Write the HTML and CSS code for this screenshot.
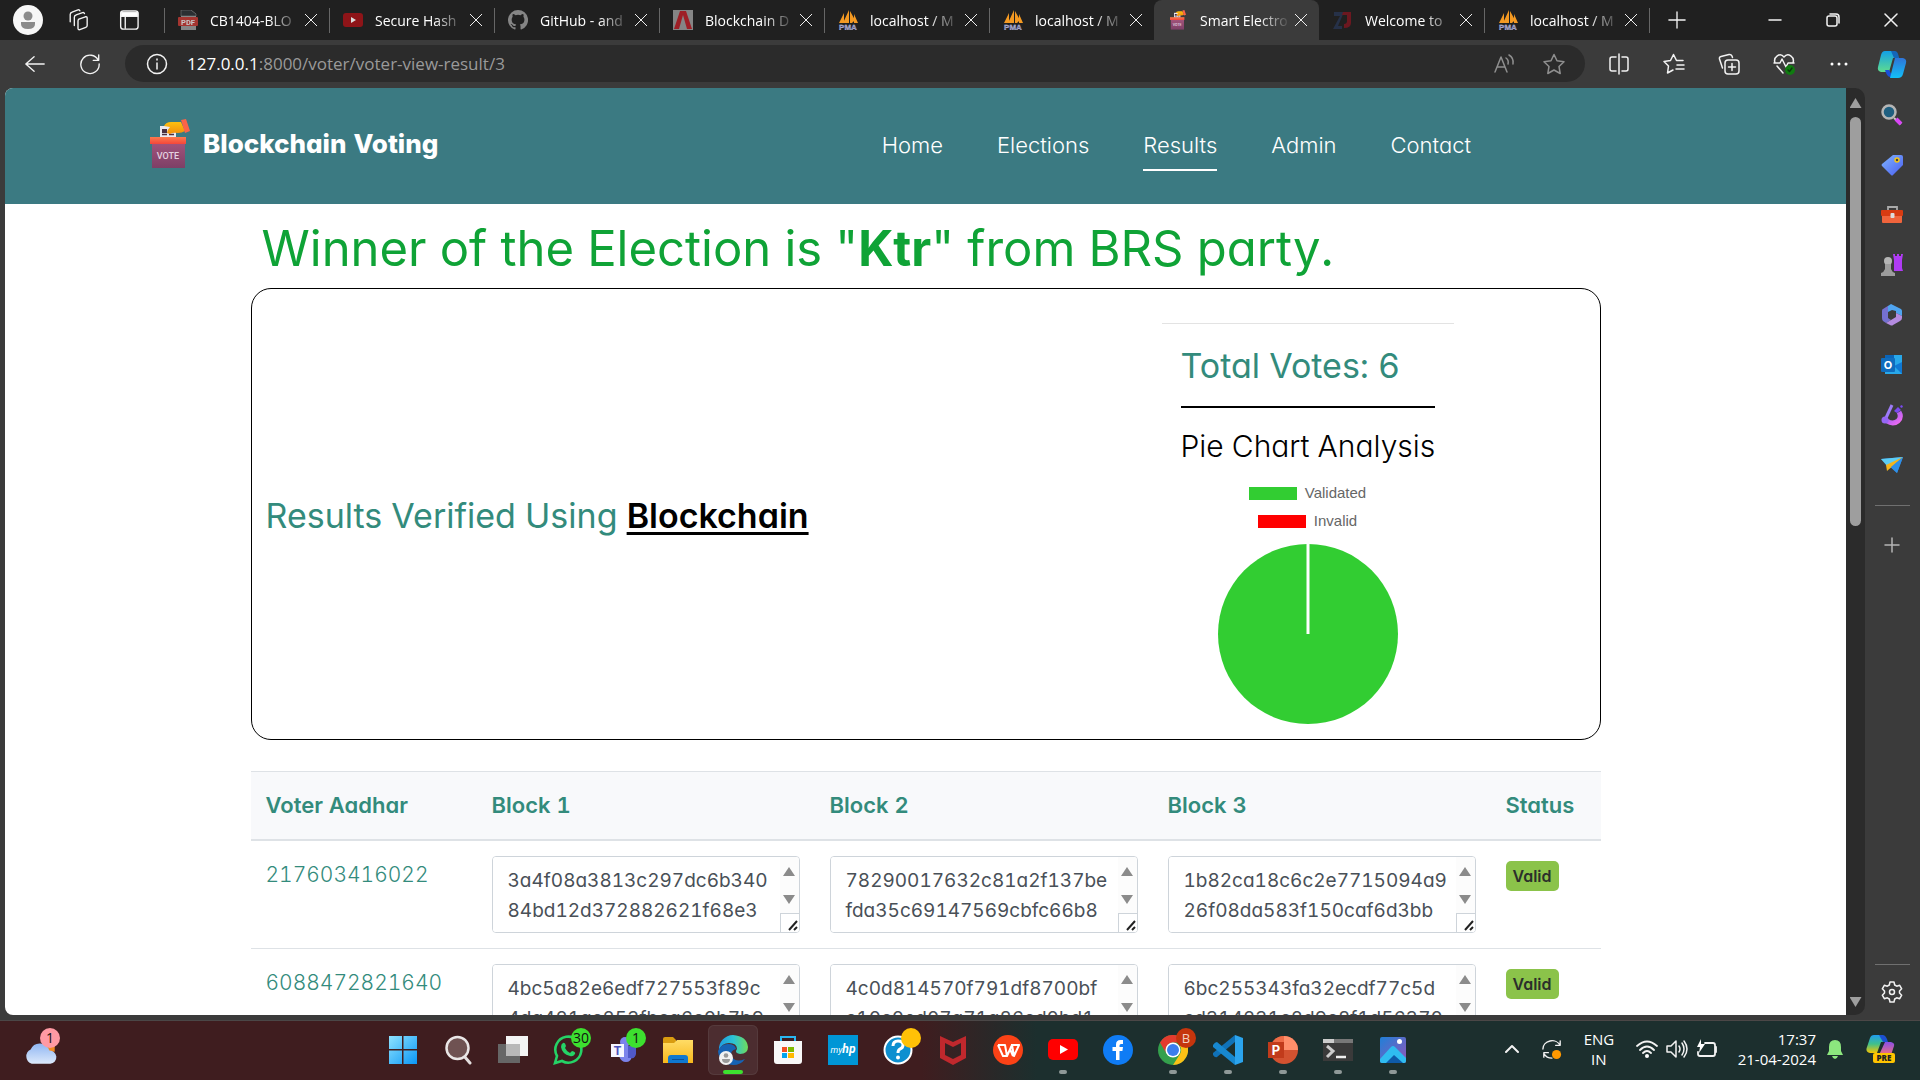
FILE: index.html
```html
<!DOCTYPE html>
<html lang="en">
<head>
<meta charset="utf-8">
<title>Smart Electronic Voting</title>
<link rel="stylesheet" href="styles.css">
</head>
<body>
<svg class="defs" width="0" height="0" aria-hidden="true">
  <defs>
    <linearGradient id="gBox" x1="0" y1="0" x2="0" y2="1"><stop offset="0" stop-color="#a3547c"/><stop offset="1" stop-color="#7d3f66"/></linearGradient>
    <linearGradient id="gOrange" x1="0" y1="0" x2="0" y2="1"><stop offset="0" stop-color="#fc7a4c"/><stop offset="1" stop-color="#f4463a"/></linearGradient>
    <linearGradient id="gHand" x1="0" y1="0" x2="0" y2="1"><stop offset="0" stop-color="#fdc00f"/><stop offset="1" stop-color="#f28f0c"/></linearGradient>
    <linearGradient id="gCopA" x1="0" y1="0" x2="0" y2="1"><stop offset="0" stop-color="#12a0e8"/><stop offset="1" stop-color="#5fdc8e"/></linearGradient>
    <linearGradient id="gCopB" x1="0" y1="0" x2="0" y2="1"><stop offset="0" stop-color="#2f74d8"/><stop offset="1" stop-color="#12c0f8"/></linearGradient>
    <linearGradient id="gCopC" x1="0" y1="0" x2="0" y2="1"><stop offset="0" stop-color="#1f9df0"/><stop offset=".5" stop-color="#3fc08a"/><stop offset="1" stop-color="#f7c600"/></linearGradient>
    <linearGradient id="gCopD" x1="0" y1="0" x2="0" y2="1"><stop offset="0" stop-color="#8a4fe8"/><stop offset="1" stop-color="#f2707a"/></linearGradient>
    <linearGradient id="gCloud" x1="0" y1="0" x2="0" y2="1"><stop offset="0" stop-color="#8fb5f2"/><stop offset="1" stop-color="#dce9fb"/></linearGradient>
    <linearGradient id="gWin" x1="0" y1="0" x2="1" y2="1"><stop offset="0" stop-color="#8fe3ff"/><stop offset="1" stop-color="#0a96f5"/></linearGradient>
    <linearGradient id="gTag" x1="0" y1="0" x2="1" y2="1"><stop offset="0" stop-color="#7fb6ff"/><stop offset="1" stop-color="#4a5df0"/></linearGradient>
    <linearGradient id="gEdge" x1="0" y1="0" x2="1" y2="0"><stop offset="0" stop-color="#1f9be0"/><stop offset=".5" stop-color="#2cc3d5"/><stop offset="1" stop-color="#6fdc5a"/></linearGradient>
    <linearGradient id="gPhoto" x1="0" y1="0" x2="1" y2="1"><stop offset="0" stop-color="#1f80d8"/><stop offset="1" stop-color="#9456b8"/></linearGradient>
    <linearGradient id="gPurple" x1="0" y1="0" x2="1" y2="1"><stop offset="0" stop-color="#8a5cf5"/><stop offset="1" stop-color="#f06af0"/></linearGradient>
    <linearGradient id="gFolder" x1="0" y1="0" x2="0" y2="1"><stop offset="0" stop-color="#ffdc66"/><stop offset="1" stop-color="#f7b81c"/></linearGradient>
    <symbol id="vote" viewBox="0 0 42 50">
      <path d="M11 7h16v12H11z" fill="#eceaf0"/><path d="M13 10h5v4h-5z" fill="#4a3040"/><path d="M13 15.500h5M20 15.500h5" stroke="#4a3040" stroke-width="1.500"/>
      <path d="M15 7Q17 3 22 3h10l4 9q-3 2-7 2-5-1-8 1l-3-1q0-3 3-6z" fill="url(#gHand)"/><path d="M32 1 37 0l4 12-5 2z" fill="#fb6448"/>
      <path d="M3 23h33v26H3z" fill="url(#gBox)"/><path d="M1 18h36v7H1z" fill="url(#gOrange)"/>
      <text x="19" y="40" text-anchor="middle" font-family="Roboto, sans-serif" font-size="9" font-weight="500" fill="#e4d3e0">VOTE</text>
    </symbol>
    <symbol id="pma" viewBox="0 0 20 20">
      <path d="M1 13 6 3v10zM5 13 11 0v13zM12 13V1l5 9-3 3zM16 13V4l4 9z" fill="#f59a22"/>
      <text x="10" y="20" text-anchor="middle" font-family="Liberation Sans, sans-serif" font-size="8" font-weight="700" fill="#7274ac" stroke="#d8d8ea" stroke-width=".3">PMA</text>
    </symbol>
  </defs>
</svg>

<div class="desktop">
  <header class="browser-top">
    <div class="tabstrip">
      <div class="tab-tools">
        <svg class="avatar" viewBox="0 0 30 30"><circle cx="15" cy="15" r="15" fill="#f7f7f7"/><circle cx="15" cy="11" r="4.500" fill="#8b8b8b"/><path d="M8 17h14v2q0 5-7 5t-7-5z" fill="#8b8b8b"/></svg>
        <svg class="i22 ln" viewBox="0 0 24 24"><path d="m13 11 7-2.500q2-.5 2 1.500v8q0 1.500-1.500 2L14 22.500q-2 .5-2-1.500v-8q0-1.500 1-2M8 18V9q0-2 2-2.500L17 4q1.500-.5 2 1M3.500 14V6q0-2 2-2.500L12 1q1.500-.5 2 1"/></svg>
        <svg class="i22 ln" viewBox="0 0 24 24"><rect x="4" y="2" width="19" height="20" rx="3"/><path d="M9 8v13"/><path d="M4.500 3.500h18V8h-18z" fill="#fff"/></svg>
      </div>
      <nav class="tabs" aria-label="Browser tabs">
        <div class="tab"><svg class="fav dim" viewBox="0 0 20 20"><path d="M3 0h10l5 4v16H3z" fill="#a9a9a9"/><path d="M3 0h10l5 4v2H3z" fill="#2f3438" stroke="#aaa" stroke-width=".5"/><rect y="7" width="20" height="9" rx="1" fill="#d23c36"/><text x="10" y="14.500" font-size="7.500" font-weight="700" text-anchor="middle" font-family="Roboto, sans-serif" fill="#fff">PDF</text></svg><span class="tab-title">CB1404-BLO</span><button class="close" aria-label="Close tab"></button></div>
        <div class="tab"><svg class="fav" viewBox="0 0 20 20"><rect y="3" width="20" height="14" rx="3" fill="#8e1418"/><path d="m8 7 5 3-5 3z" fill="#ddd"/></svg><span class="tab-title">Secure Hash</span><button class="close" aria-label="Close tab"></button></div>
        <div class="tab"><svg class="fav" viewBox="0 0 16 16"><path fill="#858585" d="M8 0a8 8 0 0 0-2.530 15.590c.4.070.55-.17.550-.38v-1.490c-2.010.37-2.530-.49-2.690-.94-.09-.23-.48-.94-.82-1.130-.28-.15-.68-.52-.01-.53.630-.01 1.080.58 1.230.82.720 1.210 1.870.87 2.330.66.070-.52.280-.87.510-1.070-1.780-.2-3.640-.89-3.640-3.950 0-.87.310-1.590.820-2.150-.08-.2-.36-1.020.080-2.120 0 0 .67-.21 2.200.82a7.500 7.500 0 0 1 4 0c1.530-1.040 2.200-.82 2.200-.82.440 1.100.16 1.920.08 2.120.51.560.82 1.270.82 2.150 0 3.070-1.870 3.750-3.650 3.950.290.250.54.730.54 1.480v2.200c0 .21.150.46.550.38A8 8 0 0 0 8 0"/></svg><span class="tab-title">GitHub - and</span><button class="close" aria-label="Close tab"></button></div>
        <div class="tab"><svg class="fav" viewBox="0 0 20 20"><path d="M0 0h20v20H0z" fill="#858585"/><path d="M7 1h6l6 18h-5L10 5 6 19H1z" fill="#9e1f26"/></svg><span class="tab-title">Blockchain D</span><button class="close" aria-label="Close tab"></button></div>
        <div class="tab"><svg class="fav"><use href="#pma"/></svg><span class="tab-title">localhost / M</span><button class="close" aria-label="Close tab"></button></div>
        <div class="tab"><svg class="fav"><use href="#pma"/></svg><span class="tab-title">localhost / M</span><button class="close" aria-label="Close tab"></button></div>
        <div class="tab active"><svg class="fav"><use href="#vote"/></svg><span class="tab-title">Smart Electro</span><button class="close" aria-label="Close tab"></button></div>
        <div class="tab"><svg class="fav" viewBox="0 0 20 20"><path d="M1 2h10L5 16h4v3H0L7 6H1z" fill="#263148"/><path d="M10 2h8v11q0 5-7 5v-4q3 0 3-3V5h-5z" fill="#6c1820"/></svg><span class="tab-title">Welcome to</span><button class="close" aria-label="Close tab"></button></div>
        <div class="tab"><svg class="fav"><use href="#pma"/></svg><span class="tab-title">localhost / M</span><button class="close" aria-label="Close tab"></button></div>
      </nav>
      <button class="icon-btn new-tab" aria-label="New tab"><svg class="i20 ln" viewBox="0 0 20 20"><path d="M10 1v18M1 10h18"/></svg></button>
      <div class="win-controls">
        <button class="icon-btn" aria-label="Minimize"><svg class="i14 ln" viewBox="0 0 14 14"><path d="M1 7h12"/></svg></button>
        <button class="icon-btn" aria-label="Restore"><svg class="i14 ln" viewBox="0 0 14 14"><rect x="1" y="3" width="10" height="10" rx="2"/><path d="M4 1h6q3 0 3 3v6"/></svg></button>
        <button class="icon-btn" aria-label="Close window"><svg class="i14 ln" viewBox="0 0 14 14"><path d="m1 1 12 12M13 1 1 13"/></svg></button>
      </div>
    </div>
    <div class="toolbar">
      <button class="icon-btn" aria-label="Back"><svg class="i22 ln" viewBox="0 0 24 24"><path d="M22 12H2m9-8-9 8 9 8"/></svg></button>
      <button class="icon-btn" aria-label="Refresh"><svg class="i22 ln" viewBox="0 0 24 24"><path d="M21 8A10 10 0 1 0 22 12M21.500 2v6h-6"/></svg></button>
      <div class="address">
        <svg class="i22 ln" viewBox="0 0 22 22"><circle cx="11" cy="11" r="9.500"/><path d="M11 10v6M11 6v1"/></svg>
        <p class="url"><b>127.0.0.1</b>:8000/voter/voter-view-result/3</p>
        <svg class="i22 ln faded" viewBox="0 0 22 22"><path d="m2 19 6-15 6 15M4 14h8M13 5q3 2 2 6M16 2q5 3 4 9"/></svg>
        <svg class="i22 ln faded" viewBox="0 0 22 22"><path d="m11 1.500 3 6.300 7 .9-5 4.800 1.200 7L11 17l-6.200 3.500 1.200-7-5-4.800 7-.9z"/></svg>
      </div>
      <div class="tools">
        <button class="icon-btn" aria-label="Split screen"><svg class="i22 ln" viewBox="0 0 22 22"><path d="M11 1v20M8 4H4q-2 0-2 2v10q0 2 2 2h4M14 4h4q2 0 2 2v10q0 2-2 2h-4"/></svg></button>
        <button class="icon-btn" aria-label="Favorites"><svg class="i22 ln" viewBox="0 0 22 22"><path d="M10 17 4.500 20l1-7L1 8.500l6.500-1L10.500 1.500l3 6H20M14 12h7M13 16h8"/></svg></button>
        <button class="icon-btn" aria-label="Collections"><svg class="i22 ln" viewBox="0 0 22 22"><rect x="7" y="7" width="14" height="14" rx="3"/><path d="M14 10.500v7M10.500 14h7M4.500 15 1.500 6Q1 4 3 3.500l8-2q2-.5 3 1.500l.5 1.500"/></svg></button>
        <button class="icon-btn" aria-label="Browser essentials"><svg class="i22 ln" viewBox="0 0 22 22"><path d="M2 10C0 4 7-1 11 4c4-5 11 0 9 6M1 10h6l2-4 4 8 2-4h6M4 13l6 7"/><circle cx="17" cy="17" r="5" fill="#107c10" stroke="none"/><path d="m15 17 1.500 1.500L19 15" stroke="#0a3d0a"/></svg></button>
        <button class="icon-btn" aria-label="Settings and more"><svg class="i22" viewBox="0 0 22 22" fill="#fff"><circle cx="4" cy="11" r="1.500"/><circle cx="11" cy="11" r="1.500"/><circle cx="18" cy="11" r="1.500"/></svg></button>
        <button class="icon-btn copilot" aria-label="Copilot"><svg class="i30" viewBox="0 0 30 30"><path d="M8 2h9l5 7h-6l-4 14H4q-4-1-3-5l3-12q1-4 4-4" fill="url(#gCopA)"/><path d="M14 2h4q3 0 4 7h-5z" fill="#1466b8"/><path d="M8 21h4l4 7h-3q-3 0-5-7" fill="#1a4fd8"/><path d="M18 9h8q4 1 3 5l-3 11q-1 4-5 4h-8z" fill="url(#gCopB)"/></svg></button>
      </div>
    </div>
  </header>

  <div class="browser-body">
    <main class="page">
      <header class="site-header">
        <a class="brand" href="#"><svg class="brand-logo"><use href="#vote"/></svg>Blockchain Voting</a>
        <nav class="site-nav">
          <a href="#">Home</a><a href="#">Elections</a><a class="current" href="#">Results</a><a href="#">Admin</a><a href="#">Contact</a>
        </nav>
      </header>
      <div class="container">
        <h1>Winner of the Election is "<b>Ktr</b>" from BRS party.</h1>
        <section class="summary">
          <h2 class="verified">Results Verified Using <b>Blockchain</b></h2>
          <div class="stats">
            <h2>Total Votes: 6</h2>
            <h3>Pie Chart Analysis</h3>
            <ul class="legend">
              <li><i class="swatch ok"></i>Validated</li>
              <li><i class="swatch bad"></i>Invalid</li>
            </ul>
            <svg class="pie" viewBox="0 0 180 180" role="img" aria-label="6 validated, 0 invalid"><circle cx="90" cy="90" r="90" fill="#32cd32"/><path d="M90 0v90" stroke="#fff" stroke-width="3"/></svg>
          </div>
        </section>
        <table class="votes">
          <thead><tr><th class="c-id">Voter Aadhar</th><th class="c-block">Block 1</th><th class="c-block">Block 2</th><th class="c-block">Block 3</th><th>Status</th></tr></thead>
          <tbody>
            <tr>
              <td>217603416022</td>
              <td><div class="hash"><textarea aria-label="Block 1">3a4f08a3813c297dc6b340
84bd12d372882621f68e3</textarea><span class="bar"><i class="up"></i><i class="down"></i><svg class="grip" viewBox="0 0 18 18"><path d="m8 16 8-9M13 16l3-3"/></svg></span></div></td>
              <td><div class="hash"><textarea aria-label="Block 2">78290017632c81a2f137be
fda35c69147569cbfc66b8</textarea><span class="bar"><i class="up"></i><i class="down"></i><svg class="grip" viewBox="0 0 18 18"><path d="m8 16 8-9M13 16l3-3"/></svg></span></div></td>
              <td><div class="hash"><textarea aria-label="Block 3">1b82ca18c6c2e7715094a9
26f08da583f150caf6d3bb</textarea><span class="bar"><i class="up"></i><i class="down"></i><svg class="grip" viewBox="0 0 18 18"><path d="m8 16 8-9M13 16l3-3"/></svg></span></div></td>
              <td><span class="badge">Valid</span></td>
            </tr>
            <tr>
              <td>6088472821640</td>
              <td><div class="hash"><textarea aria-label="Block 1">4bc5a82e6edf727553f89c
4da421ac253fbca6c0b7b9</textarea><span class="bar"><i class="up"></i><i class="down"></i><svg class="grip" viewBox="0 0 18 18"><path d="m8 16 8-9M13 16l3-3"/></svg></span></div></td>
              <td><div class="hash"><textarea aria-label="Block 2">4c0d814570f791df8700bf
c10c0ed07a71a86cd0bd1</textarea><span class="bar"><i class="up"></i><i class="down"></i><svg class="grip" viewBox="0 0 18 18"><path d="m8 16 8-9M13 16l3-3"/></svg></span></div></td>
              <td><div class="hash"><textarea aria-label="Block 3">6bc255343fa32ecdf77c5d
cd314231c2d9c8f1d56370</textarea><span class="bar"><i class="up"></i><i class="down"></i><svg class="grip" viewBox="0 0 18 18"><path d="m8 16 8-9M13 16l3-3"/></svg></span></div></td>
              <td><span class="badge">Valid</span></td>
            </tr>
          </tbody>
        </table>
      </div>
    </main>
    <div class="scrollbar"><i class="up"></i><div class="track"><div class="thumb"></div></div><i class="down"></i></div>
    <aside class="sidebar">
      <svg class="i22" viewBox="0 0 22 22"><path d="m13 14 7 6" stroke="#c9c9c9" stroke-width="2"/><path d="m15 15 5 5" stroke="#d946f5" stroke-width="4"/><circle cx="8" cy="8" r="6.500" fill="#1f5f80" stroke="#b5b5b5" stroke-width="2.500"/></svg>
      <svg class="i22" viewBox="0 0 22 22"><path d="M12 1h8q2 0 2 2v8L12 21q-1 1-2 0l-9-9q-1-1 0-2z" fill="url(#gTag)"/><circle cx="16" cy="6" r="2" fill="#444" stroke="#f5c518" stroke-width="1.500"/></svg>
      <svg class="i22" viewBox="0 0 22 22"><path d="M7 6V3h9v3" fill="none" stroke="#aaa" stroke-width="1.800"/><rect x="1" y="10" width="20" height="9" rx="1" fill="#f0643c"/><rect y="6" width="22" height="6" rx="1" fill="#d83b12"/><rect x="9.500" y="9" width="4" height="5" rx="1" fill="#ddd"/></svg>
      <svg class="i22" viewBox="0 0 22 22"><path d="M12 0h2v2h2V0h2v2h2V0h2l-1 6v8l1 3h-9V6z" fill="#b03bf5"/><circle cx="7" cy="7" r="4" fill="#b5b5b5"/><path d="M4 10h6v5q1 3 4 4v3H0v-3q3-1 4-4z" fill="#9c9c9c"/></svg>
      <svg class="i22" viewBox="0 0 22 22"><path d="M10 0 20 5q1 1 1 2v5l-6-3V7l-4-1-4 2V2z" fill="#4fa4f0"/><path d="M10 0 7 2v12l3 2-5 3-3-2q-1-1-1-3V7q0-2 1-2z" fill="#7470d0"/><path d="m10 16 5-3V9l6 3v2q0 2-2 3l-7 4q-1 1-3 0l-4-2z" fill="#b48be0"/></svg>
      <svg class="i22" viewBox="0 0 22 22"><path d="M4 1h17v19H4z" fill="#28a8ea"/><path d="M4 1h9v8H4z" fill="#0a64b8"/><path d="M13 12l8 8V8z" fill="#0f78d4"/><rect y="4" width="14" height="14" rx="1" fill="#0f6cbd"/><text x="7" y="15" text-anchor="middle" font-family="Inter, sans-serif" font-weight="700" font-size="11" fill="#fff">O</text></svg>
      <svg class="i22" viewBox="0 0 22 22"><path d="M18 8q3 5-1 9-5 4-11 0" fill="none" stroke="url(#gPurple)" stroke-width="5"/><path d="M4 16 11 1" stroke="#9d7bf8" stroke-width="3"/><circle cx="4" cy="16" r="3.500" fill="#9566f5"/><path d="m13 7 4-4 3 3-4 3zM19 2l2-1 1 2-2 1z" fill="#7a4af0"/></svg>
      <svg class="i22" viewBox="0 0 22 22"><path d="m0 5 22-2-6 16z" fill="#2f8fe8"/><path d="m0 5 22-2L6 12z" fill="#5ccdf5"/><path d="M22 3 5 11l1 6z" fill="#f5b51c"/><path d="m22 3-12 10 6 6z" fill="#2f8fe8"/></svg>
      <hr>
      <button class="icon-btn" aria-label="Customize sidebar"><svg class="i22 ln faded2" viewBox="0 0 22 22"><path d="M11 4v14M4 11h14"/></svg></button>
      <hr class="bottom">
      <button class="icon-btn" aria-label="Settings"><svg class="i22 ln" viewBox="0 0 22 22"><circle cx="11" cy="11" r="2.500"/><path d="m9 1h4l.7 3 2 1.200 3-.9 2 3.500-2.200 2.200v2l2.200 2.200-2 3.500-3-.9-2 1.200-.7 3H9l-.7-3-2-1.200-3 .9-2-3.500L3.500 12v-2L1.300 7.800l2-3.500 3 .9 2-1.200z"/></svg></button>
    </aside>
  </div>

  <footer class="taskbar">
    <div class="weather"><svg viewBox="0 0 32 32"><path d="M22 6h7v12h-7z" fill="#f08a24"/><path d="M8 29a7 7 0 0 1-1-13 9 9 0 0 1 17 1 6 6 0 0 1 1 12z" fill="url(#gCloud)"/></svg><span class="count pink">1</span></div>
    <div class="apps">
      <button class="app" aria-label="Start"><svg viewBox="0 0 30 30"><path d="M1 1h13v13H1zM15.500 1h13.500v13H15.500zM1 15.500h13v13.500H1zM15.500 15.500h13.500v13.500H15.500z" fill="url(#gWin)"/></svg></button>
      <button class="app" aria-label="Search"><svg viewBox="0 0 30 30"><path d="m21 21 6 7" stroke="#e4dede" stroke-width="3" stroke-linecap="round"/><circle cx="14.500" cy="13" r="11" fill="#6f5252" stroke="#eae6e6" stroke-width="2.500"/></svg></button>
      <button class="app" aria-label="Task view"><svg viewBox="0 0 30 30"><path d="M0 9h22v19H0z" fill="#666"/><path d="M8 1h22v20H8z" fill="#f4f4f4"/><path d="M8 9h14v12H8z" fill="#b8b8b8"/></svg></button>
      <button class="app" aria-label="WhatsApp"><svg viewBox="0 0 30 30"><path d="m2 28 2-7A13 13 0 1 1 9 26z" fill="none" stroke="#25d366" stroke-width="2.600"/><path d="M10 8q2-1 3 3l-1 2q2 4 5 5l2-2q4 1 3 3-2 3-5 2-8-2-9-9 0-3 2-4" fill="#25d366"/></svg><span class="count">30</span></button>
      <button class="app" aria-label="Teams"><svg viewBox="0 0 30 30"><circle cx="17" cy="7" r="5" fill="#7b83eb"/><path d="M11 11h13v10q-1 6-6 6t-7-6z" fill="#7b83eb"/><path d="M20 11h8v8q-1 5-5 4h-3z" fill="#5059c9"/><path d="M3 9h13v13H3z" fill="#f6f6ff"/><text x="9.500" y="20" text-anchor="middle" font-family="Inter, sans-serif" font-size="12" font-weight="700" fill="#4b53bc">T</text></svg><span class="count">1</span></button>
      <button class="app" aria-label="File Explorer"><svg viewBox="0 0 30 30"><path d="M0 4q0-2 2-2h8l3 3v5H0z" fill="#d99c10"/><path d="M0 8h11l3-3h16v23H0z" fill="url(#gFolder)"/><path d="M5 28v-5q0-3 3-3h14q3 0 3 3v5z" fill="#0f78d0"/><path d="M9 24.500h12" stroke="#0a4f98"/></svg></button>
      <button class="app running current-app" aria-label="Edge"><svg viewBox="0 0 30 30"><path d="M1 15A14 14 0 0 1 15 0q14 1 15 12 0 7-8 7-6-1-3-5 0-6-8-6-7 0-10 7" fill="url(#gEdge)"/><path d="M0 16q3-7 10-7 7 0 8 5-7 2-4 8 4 6 13 2-4 6-12 6Q1 29 0 16" fill="#1663b5"/><circle cx="8" cy="23" r="7" fill="#f2f2f2"/><circle cx="8" cy="20.500" r="2.300" fill="#999"/><path d="M4 24h8q0 4-4 4t-4-4" fill="#999"/></svg></button>
      <button class="app" aria-label="Store"><svg viewBox="0 0 30 30"><path d="M8 7V2h14v5" fill="none" stroke="#29b6f0" stroke-width="2"/><path d="M1 6h28v20q0 3-3 3H4q-3 0-3-3z" fill="#f8f8f8"/><path d="M9 12h5v5H9z" fill="#f25022"/><path d="M15 12h6v5h-6z" fill="#7fba00"/><path d="M9 18h5v5H9z" fill="#00a4ef"/><path d="M15 18h6v5h-6z" fill="#ffb900"/></svg></button>
      <button class="app" aria-label="myHP"><svg viewBox="0 0 30 30"><path d="M0 0h30v30H0z" fill="#0096d6"/><text x="15" y="18" text-anchor="middle" font-family="Roboto, sans-serif" font-style="italic" font-size="9" fill="#fff">my<tspan font-weight="700" font-size="12">hp</tspan></text></svg></button>
      <button class="app" aria-label="HP Support Assistant"><svg viewBox="0 0 30 30"><circle cx="15" cy="15" r="13.500" fill="#0d8fd0" stroke="#fff" stroke-width="2"/><path d="M10 11q0-5 5-5t5 4q0 3-3 4-2 1-2 4" fill="none" stroke="#fff" stroke-width="3"/><circle cx="15" cy="22.500" r="2" fill="#fff"/></svg><span class="count amber"></span></button>
      <button class="app" aria-label="McAfee"><svg viewBox="0 0 30 30"><path d="m2 1 13 6 13-6v22l-13 7-13-7zM7 8v12l8 4 8-4V8l-8 4z" fill="#c0282d" fill-rule="evenodd"/></svg></button>
      <button class="app" aria-label="WPS Office"><svg viewBox="0 0 30 30"><circle cx="15" cy="15" r="15" fill="#fb4216"/><path d="M5 10h7l2 11 5-11 2 11 5-11h-8M5 10l5 11h4M17 14l3 7" fill="none" stroke="#fff" stroke-width="2" stroke-linejoin="round"/></svg></button>
      <button class="app running" aria-label="YouTube"><svg viewBox="0 0 30 30"><rect y="4" width="30" height="21" rx="5" fill="#f00"/><path d="m12 10 8 4.500-8 4.500z" fill="#fff"/></svg></button>
      <button class="app" aria-label="Facebook"><svg viewBox="0 0 30 30"><circle cx="15" cy="15" r="15" fill="#0f7cf5"/><path d="M13 25V16H9.500v-4H13V9.500Q13 5 17.500 5H20v4h-2q-1.500 0-1.500 1.500V12H20l-.6 4h-2.900v9z" fill="#fff"/></svg></button>
      <button class="app running" aria-label="Chrome"><svg viewBox="0 0 30 30"><circle cx="15" cy="15" r="15" fill="#34a04c"/><path d="M2 7.500A15 15 0 0 1 28 7.500H15A8 8 0 0 0 8 18z" fill="#e33b2e"/><path d="M28 7.500A15 15 0 0 1 15 30l7-11a8 8 0 0 0 0-8z" fill="#fbc116"/><circle cx="15" cy="15" r="7.500" fill="#fff"/><circle cx="15" cy="15" r="6" fill="#3b7ded"/></svg><span class="count rust">B</span></button>
      <button class="app running" aria-label="Visual Studio Code"><svg viewBox="0 0 30 30"><path d="M22 0v7L4 22q-2 1-4-2v-2z" fill="#1072b8"/><path d="M22 30v-8L4 7Q2 7 0 10v2z" fill="#1788d0"/><path d="m22 0 8 3v24l-8 3z" fill="#2ba4ee"/></svg></button>
      <button class="app running" aria-label="PowerPoint"><svg viewBox="0 0 30 30"><circle cx="16" cy="15" r="14" fill="#d35230"/><path d="M16 1a14 14 0 0 1 14 14H16z" fill="#ff8f6b"/><path d="M16 1a14 14 0 0 0-14 14h14z" fill="#ed6c47"/><path d="M0 7h16v16H0z" fill="#c13b1b"/><text x="8" y="20" text-anchor="middle" font-family="Inter, sans-serif" font-size="13" font-weight="700" fill="#fff">P</text></svg></button>
      <button class="app running" aria-label="Terminal"><svg viewBox="0 0 30 30"><path d="M0 4h30v22H0z" fill="#3a3a3a"/><path d="M0 4h30v4H0z" fill="#777"/><path d="M0 4h11v4H0z" fill="#ccc"/><path d="m4 11 6 5-6 6" fill="none" stroke="#ccc" stroke-width="3"/><path d="M13 22h10" stroke="#eee" stroke-width="2.500"/></svg></button>
      <button class="app running" aria-label="Photos"><svg viewBox="0 0 30 30"><rect x="2" y="2" width="26" height="26" rx="2" fill="url(#gPhoto)"/><path d="M2 24 13 12q2-2 4 0l11 11v3q0 2-2 2H4q-2 0-2-2z" fill="#2fbcf0"/><path d="m8 28 8-8 9 8z" fill="#0e5aa8"/><circle cx="21.500" cy="6.500" r="2.500" fill="#fff"/></svg></button>
    </div>
    <div class="tray">
      <svg class="chev ln" viewBox="0 0 14 14"><path d="m1 10 6-6 6 6" stroke-width="2"/></svg>
      <svg class="sync ln" viewBox="0 0 22 22"><path d="M1 11A10 9 0 0 1 20 7M20 2v5h-5M2 20v-5h5M2 16q3 5 9 5"/><circle cx="16" cy="17" r="5" fill="#ff9800" stroke="none"/></svg>
      <p class="lang">ENG<br>IN</p>
      <div class="status">
        <svg class="ln" viewBox="0 0 22 22"><path d="M1 8q10-9 20 0M4 12q7-7 14 0M7 15q4-4 8 0" stroke-width="1.800"/><circle cx="11" cy="18" r="2" fill="#fff" stroke="none"/></svg>
        <svg class="ln" viewBox="0 0 22 22"><path d="M1 8h4l5-5v16l-5-5H1zM13 8q2 3 0 6M16 5q4 6 0 12M18 3q6 8 0 16"/></svg>
        <svg class="ln" viewBox="0 0 22 22"><path d="M9 5h8q2 0 2 2v9q0 2-2 2H4q-2 0-2-2v-2M20 9v5" stroke-width="1.800"/><path d="M5 1 1 9h3l-1 6 6-9H5z" fill="#fff" stroke="none"/></svg>
      </div>
      <p class="clock">17:37<br>21-04-2024</p>
      <svg class="bell" viewBox="0 0 18 20"><path d="M9 1q6 0 6 7v4l2 4H1l2-4V8q0-7 6-7M6 17h6q-1 3-3 3t-3-3" fill="#8ce67e"/></svg>
      <svg class="pre" viewBox="0 0 30 30"><path d="M8 1h8l4 7h-5l-4 11H4q-5-1-3-6L4 4q1-3 4-3" fill="url(#gCopC)"/><path d="M13 1h4q3 0 5 7h-5z" fill="#1b50d0"/><path d="M19 8h6q4 1 3 4l-3 9H13z" fill="url(#gCopD)"/><rect x="7" y="19" width="22" height="10" rx="2" fill="#ffc400"/><text x="18" y="27" text-anchor="middle" font-family="Open Sans, sans-serif" font-size="8" font-weight="800" fill="#222">PRE</text></svg>
    </div>
  </footer>
</div>
</body>
</html>
```
FILE: styles.css
```css
* { box-sizing: border-box; }
body { margin: 0; font-family: "Open Sans", "Noto Sans", sans-serif; background: #3b3b3b; color: #fff; }
h1, h2, h3, p, ul { margin: 0; padding: 0; font-weight: 400; }
button { border: 0; padding: 0; background: none; color: inherit; font: inherit; }
svg { display: block; flex: none; }
.defs { position: absolute; }
.desktop { height: 100vh; display: flex; flex-direction: column; overflow: hidden; }

.ln { fill: none; stroke: #f2f2f2; stroke-width: 1.5; stroke-linecap: round; stroke-linejoin: round; }
.faded { stroke: #8f8f8f; }
.faded2 { stroke: #b5b5b5; }
.i14 { width: 14px; height: 14px; }
.i20 { width: 18px; height: 18px; }
.i22 { width: 22px; height: 22px; }
.i30 { width: 30px; height: 30px; }
.icon-btn { display: flex; align-items: center; justify-content: center; }

/* tab strip */
.tabstrip { display: flex; height: 40px; background: #202020; align-items: center; }
.tab-tools { display: flex; align-items: center; gap: 28px; width: 164px; padding-left: 13px; }
.avatar { width: 30px; height: 30px; margin-right: -4px; }
.tabs { display: flex; height: 40px; }
.tab { display: flex; align-items: center; width: 165px; padding: 0 12px 0 14px; background: linear-gradient(#666, #666) left center / 1px 25px no-repeat; }
.tab.active { background: #3b3b3b; border-radius: 8px 8px 0 0; }
.tab.active + .tab { background: none; }
.fav { width: 20px; height: 20px; }
.dim { opacity: .75; }
.tab-title { flex: 1; min-width: 0; margin-left: 12px; font-size: 14px; white-space: nowrap; -webkit-mask-image: linear-gradient(90deg, #000 68%, transparent 104%); mask-image: linear-gradient(90deg, #000 68%, transparent 104%); }
.close { width: 12px; height: 12px; margin-left: 8px; background: linear-gradient(45deg, transparent 46%, #eee 46%, #eee 54%, transparent 54%), linear-gradient(-45deg, transparent 46%, #eee 46%, #eee 54%, transparent 54%); }
.new-tab { width: 54px; height: 25px; border-left: 1px solid #666; }
.win-controls { display: flex; margin-left: auto; }
.win-controls .icon-btn { width: 58px; height: 40px; }

/* toolbar */
.toolbar { display: flex; align-items: center; height: 48px; padding: 0 8px 1px 7px; }
.toolbar > .icon-btn { width: 55px; }
.address { flex: 1; display: flex; align-items: center; gap: 28px; height: 37px; margin-left: 8px; padding: 0 20px 0 21px; background: #2b2b2b; border-radius: 19px; }
.url { flex: 1; margin-left: -9px; font-size: 17px; color: #9a9a9a; }
.url b { font-weight: 400; color: #fff; }
.tools { display: flex; margin-left: 6px; }
.tools .icon-btn { width: 55px; }
.tools .copilot { width: 40px; margin-left: 6px; }

/* browser body */
.browser-body { flex: 1; min-height: 0; display: flex; padding: 0 0 5px 5px; }
.page { flex: 1; min-width: 0; overflow: hidden; background: #fff; border-radius: 8px 0 0 8px; color: #338b7c; font-family: Inter, "Open Sans", sans-serif; font-feature-settings: "cv11", "ss03", "tnum"; }
.scrollbar { width: 19px; display: flex; flex-direction: column; align-items: center; padding: 10px 0 8px; background: #2b2b2b; border-radius: 0 10px 10px 0; }
.up, .down { display: block; width: 12px; height: 10px; background: #9e9e9e; clip-path: polygon(50% 0, 100% 100%, 0 100%); }
.down { clip-path: polygon(0 0, 100% 0, 50% 100%); }
.track { flex: 1; width: 11px; margin: 9px 0; }
.thumb { height: 47%; border-radius: 6px; background: #9e9e9e; }
.sidebar { width: 55px; display: flex; flex-direction: column; align-items: center; gap: 28px; padding: 16px 1px 12px 0; }
.sidebar hr { width: 35px; margin: 1px 0 0; border: 0; border-top: 1px solid #707070; }
.sidebar .bottom { margin-top: auto; margin-bottom: -12px; }

/* site header */
.site-header { display: flex; align-items: center; height: 116px; padding: 0 375px 0 144px; background: #3b7a82; }
.brand { display: flex; align-items: center; gap: 12px; padding-bottom: 5px; color: #fff; font-size: 26px; font-weight: 800; text-decoration: none; }
.brand-logo { width: 42px; height: 50px; }
.site-nav { display: flex; gap: 54px; margin-left: auto; }
.site-nav a { padding: 8px 0; border-bottom: 2px solid transparent; color: #fff; font-size: 22px; font-weight: 300; line-height: 32px; text-decoration: none; }
.site-nav .current { border-color: #fff; }

/* results */
.container { width: 1350px; max-width: 100%; margin: 0 auto; }
h1 { padding: 15px 11px 9px; font-size: 49px; line-height: 60px; color: #0fa336; white-space: nowrap; }
h1 b { font-weight: 700; }
.summary { display: flex; align-items: center; justify-content: space-between; padding: 34px 146px 15px 14px; border: 1px solid #000; border-radius: 20px; }
.summary h2 { font-size: 34px; line-height: 44px; }
.summary .verified { padding-bottom: 16px; }
.summary h2 b { color: #000; font-weight: 600; text-decoration: underline; text-underline-offset: 4px; }
.stats { width: 292px; padding: 20px 19px 0; border-top: 1px solid #e3e3e3; }
.stats h2 { padding-bottom: 18px; border-bottom: 2px solid #000; }
.stats h3 { margin-top: 19px; color: #000; font-size: 30px; line-height: 38px; font-weight: 300; white-space: nowrap; }
.legend { list-style: none; margin-top: 14px; font: 15px/28px "Liberation Sans", Arial, sans-serif; color: #666; }
.legend li { display: flex; align-items: center; justify-content: center; gap: 8px; }
.swatch { width: 48px; height: 13px; }
.ok { background: #32cd32; }
.bad { background: #f00; }
.pie { width: 180px; height: 180px; margin: 9px auto 0; }

.votes { width: 100%; margin-top: 31px; border-collapse: separate; border-spacing: 0; table-layout: fixed; }
.votes th, .votes td { padding: 15px; border-top: 1px solid #dee2e6; text-align: left; vertical-align: top; font-size: 22px; line-height: 37px; }
.votes tbody tr:first-child td { border-top: 0; }
.votes th { background: #f8f9fb; border-bottom: 2px solid #dee2e6; font-weight: 600; }
.votes td { font-size: 21px; font-weight: 300; }
.votes .c-id { width: 226px; }
.votes .c-block { width: 338px; }
.hash { display: flex; height: 77px; border: 1px solid #ced4da; border-radius: 4px; overflow: hidden; }
.hash textarea { flex: 1; min-width: 0; border: 0; padding: 9px 0 0 15px; resize: none; overflow: hidden; outline: 0; background: #fff; color: #495057; font: 400 19px/30px Inter, "Open Sans", sans-serif; font-feature-settings: inherit; white-space: pre; }
.bar { width: 19px; display: flex; flex-direction: column; align-items: center; padding-top: 10px; background: #fcfcfc; }
.bar .up, .bar .down { width: 12px; height: 9px; background: #8b8b8b; }
.bar .down { margin-top: 19px; }
.grip { width: 19px; height: 19px; margin-top: auto; border: 1px solid #ced4da; border-width: 1px 0 0 1px; background: #fff; fill: none; stroke: #222; stroke-width: 2; }
.badge { display: block; width: 53px; margin-top: 5px; border-radius: 5px; background: #8bc34a; color: #2b2f2b; font-size: 16px; font-weight: 600; line-height: 30px; text-align: center; }

/* taskbar */
.taskbar { flex: none; height: 60px; display: flex; align-items: center; border-top: 1px solid #4b4747; background: linear-gradient(90deg, #3f1d1f 48%, #1c2f2e 54%); }
.weather { position: relative; width: 37px; height: 60px; margin-left: 23px; }
.weather svg { width: 35px; height: 37px; margin-top: 10px; }
.apps { display: flex; gap: 5px; margin-left: 318px; padding-bottom: 1px; }
.app { position: relative; width: 50px; height: 50px; display: grid; place-items: center; border-radius: 6px; }
.app svg { width: 30px; height: 30px; }
.current-app { background: #4c2d30; box-shadow: inset 0 0 0 1px #553a3c; }
.count { position: absolute; top: 3px; right: 2px; min-width: 20px; height: 20px; padding: 0 2px; border-radius: 10px; background: #3de02f; color: #111; font-size: 14px; line-height: 20px; text-align: center; }
.weather .count { top: 7px; right: 0; }
.pink { background: #ff9aa4; }
.amber { background: #ffc107; }
.rust { background: #c5350d; color: #f2cfc2; font-size: 13px; }
.running::after { content: ""; position: absolute; left: 21px; bottom: 1px; width: 8px; height: 4px; border-radius: 2px; background: #8f9998; }
.current-app::after { left: 15px; width: 20px; background: #3de02f; }
.tray { display: flex; align-items: center; margin-left: auto; padding-right: 24px; padding-bottom: 3px; font-size: 15px; line-height: 20px; }
.chev { width: 14px; height: 14px; margin-right: 23px; }
.sync { width: 20px; height: 22px; margin-right: 22px; }
.lang { width: 30px; text-align: center; }
.status { display: flex; gap: 8px; margin: 0 20px 0 22px; }
.status svg { width: 22px; height: 22px; }
.clock { text-align: right; }
.bell { width: 18px; height: 20px; margin: 0 22px 0 10px; }
.pre { width: 30px; height: 30px; }
```
